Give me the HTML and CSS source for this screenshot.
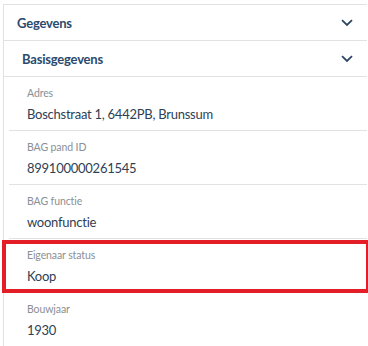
FILE: index.html
```html
<!DOCTYPE html>
<html lang="nl">
<head>
    <meta charset="UTF-8">
    <meta name="viewport" content="width=device-width, initial-scale=1.0">
    <title>Gegevens</title>
    <link rel="stylesheet" href="styles.css">
</head>
<body>
    <div class="panel">
        <div class="section-header">
            <span>Gegevens</span>
            <svg class="chevron" viewBox="0 0 12 8" width="12" height="8"><path d="M1 1.2 L6 6 L11 1.2" fill="none" stroke="#2c4663" stroke-width="1.8"/></svg>
        </div>
        <div class="sub-header">
            <span>Basisgegevens</span>
            <svg class="chevron" viewBox="0 0 12 8" width="12" height="8"><path d="M1 1.2 L6 6 L11 1.2" fill="none" stroke="#2c4663" stroke-width="1.8"/></svg>
        </div>
        <div class="fields">
            <div class="field">
                <div class="label">Adres</div>
                <div class="value">Boschstraat 1, 6442PB, Brunssum</div>
            </div>
            <div class="field">
                <div class="label">BAG pand ID</div>
                <div class="value">899100000261545</div>
            </div>
            <div class="field">
                <div class="label">BAG functie</div>
                <div class="value">woonfunctie</div>
            </div>
            <div class="field highlight">
                <div class="label">Eigenaar status</div>
                <div class="value">Koop</div>
            </div>
            <div class="field">
                <div class="label">Bouwjaar</div>
                <div class="value">1930</div>
            </div>
        </div>
    </div>
</body>
</html>
```

FILE: styles.css
```css
body {
    margin: 0;
    padding: 4px 0 0 3px;
    background: #fff;
    font-family: Lato, "Open Sans", sans-serif;
    color: #2c4663;
}

.panel {
    width: 363px;
    border-left: 1px solid #e2e2e2;
    border-top: 1px solid #e2e2e2;
}

.section-header,
.sub-header {
    display: flex;
    justify-content: space-between;
    align-items: center;
    height: 35px;
    border-bottom: 1px solid #e2e2e2;
    font-weight: bold;
    font-size: 13px;
    letter-spacing: -0.2px;
    color: #2b4a6e;
}

.section-header {
    padding: 0 14px 0 13px;
}

.sub-header {
    padding: 0 14px 0 18px;
}

.chevron {
    display: block;
}

.fields {
    padding-left: 5px;
}

.field {
    position: relative;
    height: 53px;
    padding-left: 18px;
    border-bottom: 1px solid #e2e2e2;
}

.label {
    padding-top: 8px;
    font-size: 10.5px;
    letter-spacing: -0.1px;
    color: #8a8f96;
    line-height: 16px;
}

.value {
    margin-top: 3px;
    font-size: 13px;
    letter-spacing: -0.25px;
    line-height: 20px;
    color: #2e3f55;
}

.field:last-child {
    border-bottom: none;
}

/* highlighted row */
.highlight::after {
    content: "";
    position: absolute;
    top: 1px;
    left: -7px;
    right: -3px;
    bottom: -1px;
    border: 4px solid #e41e26;
    pointer-events: none;
}
```
